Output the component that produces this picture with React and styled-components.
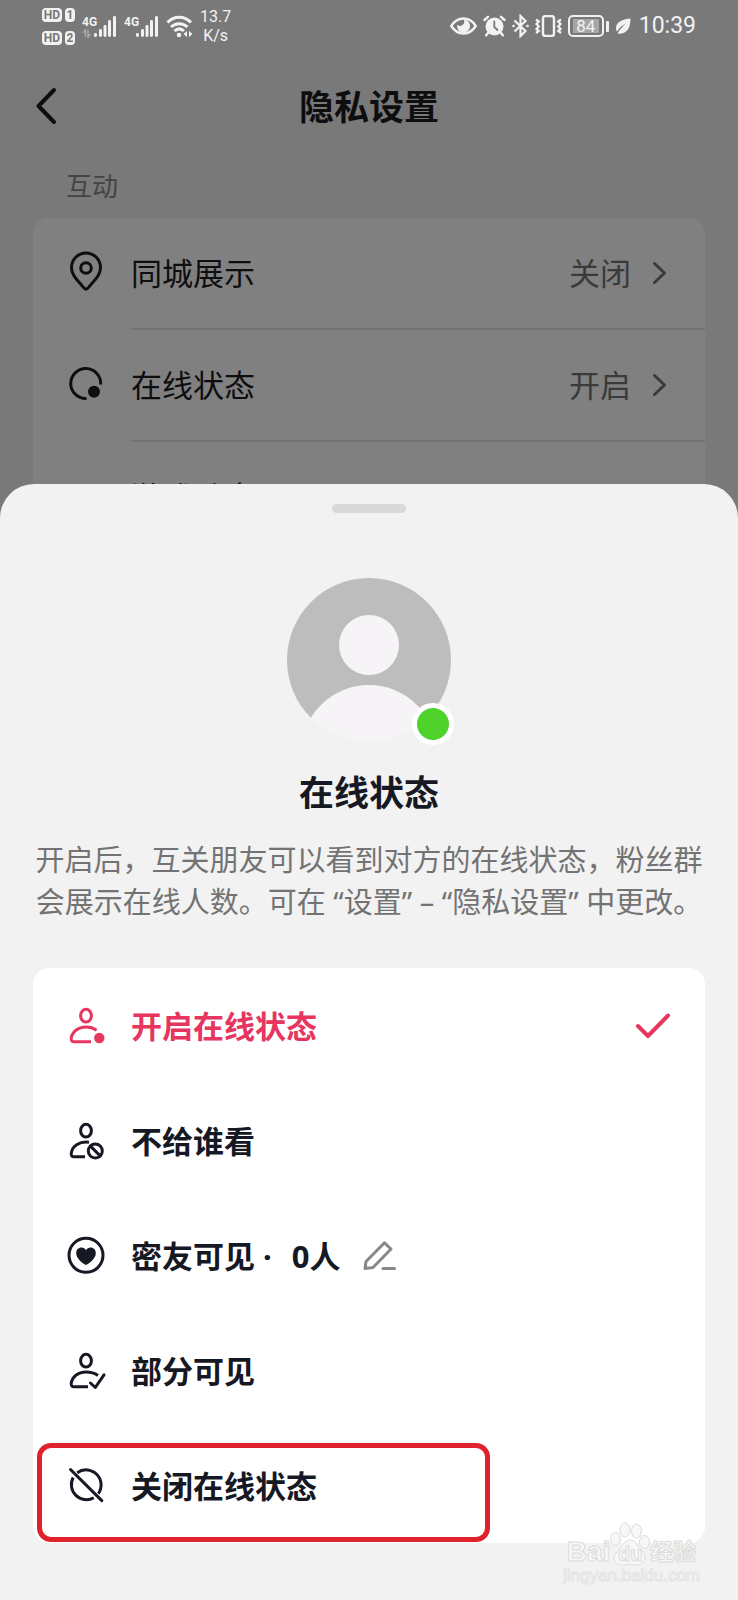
import { useState } from 'react';
import styled, { createGlobalStyle } from 'styled-components';

const GlobalStyle = createGlobalStyle`
    * {
        box-sizing: border-box;
    }

    body {
        margin: 0;
        background: #797979;
        font-family: 'Noto Sans', 'Noto Sans CJK SC', sans-serif;
    }

    button {
        border: 0;
        padding: 0;
        background: none;
        color: inherit;
        font: inherit;
        cursor: pointer;
    }
`;

const Screen = styled.div`
    position: relative;
    display: flex;
    flex-direction: column;
    min-height: 100vh;
    overflow: hidden;
`;

const StatusBar = styled.div`
    display: flex;
    align-items: center;
    justify-content: space-between;
    height: 52px;
    padding: 0 42px;
    color: #f2f2f2;
    font-family: Roboto, sans-serif;
`;

const StatusGroup = styled.div`
    display: flex;
    align-items: center;
    gap: ${(props) => props.$gap}px;
`;

const Sims = styled.div`
    display: grid;
    grid-template-columns: 20px 10px;
    gap: 9px 3px;
`;

const SimBadge = styled.span`
    border-radius: 4px;
    background: #f2f2f2;
    color: #797979;
    font-size: 12px;
    font-weight: 700;
    line-height: 14px;
    text-align: center;
`;

const Speed = styled.div`
    font-size: 16px;
    line-height: 19px;
    text-align: center;
`;

const Battery = styled.div`
    display: flex;
    align-items: center;
    gap: 2px;

    &::after {
        content: '';
        width: 3px;
        height: 11px;
        border-radius: 1px;
        background: #f2f2f2;
    }
`;

const BatteryLevel = styled.span`
    width: 36px;
    border: 2px solid #f2f2f2;
    border-radius: 5px;
    background: linear-gradient(#a6a6a6, #a6a6a6) center / 26px 14px no-repeat;
    font-size: 17px;
    line-height: 18px;
    text-align: center;
`;

const Clock = styled.time`
    margin-left: 2px;
    font-size: 23px;
    line-height: 28px;
`;

const Header = styled.header`
    display: grid;
    grid-template-columns: 40px 1fr 40px;
    align-items: center;
    height: 110px;
    padding: 0 28px;
    color: #0e0e10;
`;

const BackButton = styled.button`
    justify-self: start;
    padding-left: 8px;
    line-height: 0;
`;

const Title = styled.h1`
    margin: 0;
    font-size: 35px;
    font-weight: 700;
    line-height: 48px;
    text-align: center;
`;

const SectionLabel = styled.h2`
    margin: 0;
    padding: 0 66px;
    color: #444;
    font-size: 26px;
    font-weight: 400;
    line-height: 48px;
`;

const SettingList = styled.div`
    margin: 8px 33px 0;
    border-radius: 16px;
    background: #808080;
`;

const SettingRow = styled.button`
    display: flex;
    align-items: center;
    gap: 25px;
    width: 100%;
    height: 112px;
    padding-left: 33px;
    color: #0e0e10;
    font-size: 31px;
    line-height: 44px;
    text-align: left;
`;

const SettingBody = styled.span`
    display: flex;
    flex: 1;
    align-items: center;
    height: 112px;
    padding-right: 38px;
    border-bottom: 2px solid #737373;
`;

const SettingValue = styled.span`
    margin: 0 21px 0 auto;
    color: #3a3a3a;
`;

const Icon = styled.svg`
    flex: none;
    overflow: visible;
    fill: none;
    stroke: currentColor;
    stroke-width: 3;
    stroke-linecap: round;
    stroke-linejoin: round;
`;

const Sheet = styled.section`
    position: relative;
    flex: 1;
    display: flex;
    flex-direction: column;
    align-items: center;
    margin-top: -70px;
    padding: 20px 33px 57px;
    border-radius: 34px 34px 0 0;
    background: #f2f2f2;
    color: #161823;
`;

const Handle = styled.div`
    width: 74px;
    height: 9px;
    border-radius: 5px;
    background: #d9d9d9;
`;

const Avatar = styled.div`
    position: relative;
    margin-top: 65px;
    line-height: 0;
`;

const OnlineDot = styled.span`
    position: absolute;
    right: -3px;
    bottom: -3px;
    width: 42px;
    height: 42px;
    border: 5px solid #fff;
    border-radius: 50%;
    background: #4fd22b;
`;

const SheetTitle = styled(Title).attrs({ as: 'h2' })`
    margin-top: 27px;
`;

const Description = styled.p`
    margin: 22px -20px 0;
    color: #737373;
    font-size: 29px;
    line-height: 42px;
    text-align: center;
`;

const OptionList = styled.div`
    width: 100%;
    margin-top: 45px;
    border-radius: 16px;
    background: #fff;
`;

const OptionRow = styled.div`
    position: relative;
    display: flex;
    align-items: center;
    height: 115px;
    padding: 0 35px 0 33px;
    color: ${(props) => (props.$active ? '#e6365f' : '#161823')};
`;

const OptionLabel = styled.label`
    display: flex;
    flex: ${(props) => (props.$fill ? 1 : 'none')};
    align-items: center;
    gap: 25px;
    font-size: 31px;
    font-weight: 700;
    line-height: 44px;
    cursor: pointer;

    input {
        position: absolute;
        opacity: 0;
    }
`;

const Count = styled.span`
    margin-left: 20px;
`;

const EditButton = styled.button`
    margin-left: 22px;
    color: #888;
    line-height: 0;
`;

const Highlight = styled.div`
    position: absolute;
    inset: 15px auto 1px 4px;
    width: 68%;
    max-width: 453px;
    border: 5px solid #e0222c;
    border-radius: 14px;
    pointer-events: none;
`;

const Watermark = styled.div`
    position: absolute;
    right: 38px;
    bottom: 14px;
    display: flex;
    flex-direction: column;
    align-items: center;
    color: #f7f7f7;
    font-family: 'Liberation Sans', 'Noto Sans CJK SC', sans-serif;
    -webkit-text-stroke: 1px #dcdcdc;
    pointer-events: none;
`;

const WatermarkBrand = styled.div`
    display: flex;
    align-items: flex-end;
    font-size: 28px;
    font-weight: 700;
    line-height: 28px;
`;

const WatermarkPaw = styled.span`
    display: grid;
    justify-items: center;
    align-items: end;

    > * {
        grid-area: 1 / 1;
    }

    span {
        font-size: 20px;
        line-height: 24px;
    }
`;

const WatermarkName = styled.span`
    font-size: 23px;
`;

const WatermarkSite = styled.div`
    font-size: 17px;
    line-height: 20px;
    -webkit-text-stroke: 1px #e4e4e4;
`;

const PERSON_HEAD = <ellipse cx="20" cy="9.7" rx="5.4" ry="6.4" />;

const ICONS = {
    pin: (
        <>
            <path d="M20 35.3 C18.8 35.3 18 34.2 16.6 32.4 C11.5 26.2 5.5 21.5 5.5 13.5 A14.5 14.5 0 0 1 34.5 13.5 C34.5 21.5 28.5 26.2 23.4 32.4 C22 34.2 21.2 35.3 20 35.3 Z" />
            <circle cx="20" cy="14" r="5.3" />
        </>
    ),
    online: (
        <>
            <path d="M34.7 18.5 A15 15 0 1 0 20.5 32.5" strokeLinecap="butt" />
            <circle cx="28" cy="25.7" r="6" fill="currentColor" stroke="none" />
        </>
    ),
    game: (
        <>
            <rect x="4" y="11" width="32" height="21" rx="10" />
            <path d="M10 21.5 H18 M14 17.5 V25.5 M27 21.5 H28" />
        </>
    ),
    personDot: (
        <>
            {PERSON_HEAD}
            <path d="M30.6 24.2 C27.5 22 24 21 20 21 C12 21 6 25.8 5.2 32.5 C5 34.8 6 35.7 8 35.7 H25" strokeLinecap="butt" />
            <circle cx="33.3" cy="32" r="5.2" fill="currentColor" stroke="none" />
        </>
    ),
    personBlock: (
        <>
            {PERSON_HEAD}
            <path d="M23 21.2 C13 20 6 25.5 5.2 32.5 C5 34.8 6 35.7 8 35.7 H19" strokeLinecap="butt" />
            <circle cx="29.3" cy="30" r="7" />
            <path d="M24.4 25.1 L34.2 34.9" />
        </>
    ),
    heart: (
        <>
            <circle cx="20" cy="19.3" r="17" />
            <path
                d="M20 29 C16.5 27.2 10.2 22.4 10.2 17.2 C10.2 13.8 12.5 11.6 15.3 11.6 C17.4 11.6 19 12.6 20 14.2 C21 12.6 22.6 11.6 24.7 11.6 C27.5 11.6 29.8 13.8 29.8 17.2 C29.8 22.4 23.5 27.2 20 29 Z"
                fill="currentColor"
                stroke="none"
            />
        </>
    ),
    personCheck: (
        <>
            {PERSON_HEAD}
            <path d="M32 24.4 C28.5 22 25 21 20 21 C12 21 6 25.8 5.2 32.5 C5 34.8 6 35.7 8 35.7 H22" strokeLinecap="butt" />
            <path d="M24.5 32 L29.3 36.5 L38 23.8" />
        </>
    ),
    off: (
        <>
            <path d="M7.2 11.5 A15 15 0 0 0 27.8 31.7" strokeLinecap="butt" />
            <path d="M11.2 6.8 A15 15 0 0 1 32.3 27.6" strokeLinecap="butt" />
            <path d="M4.5 3.5 L35.8 34.6" />
        </>
    ),
};

const settings = [
    { icon: 'pin', label: '同城展示', value: '关闭' },
    { icon: 'online', label: '在线状态', value: '开启' },
    { icon: 'game', label: '游戏动态', value: '' },
];

const options = [
    { id: 'open', icon: 'personDot', label: '开启在线状态' },
    { id: 'hide', icon: 'personBlock', label: '不给谁看' },
    { id: 'close-friends', icon: 'heart', label: '密友可见 ·', count: '0人', editable: true },
    { id: 'partial', icon: 'personCheck', label: '部分可见' },
    { id: 'off', icon: 'off', label: '关闭在线状态', highlighted: true },
];

function Signal({ data }) {
    return (
        <svg width="35" height="24" viewBox="0 0 35 24" fill="#f2f2f2">
            <text x="0" y="12" fontSize="12" fontWeight="700">
                4G
            </text>
            {data && (
                <path d="M3.5 23 V16 L1 19 M6 16 V23 L8.5 20" fill="none" stroke="#a8a8a8" strokeWidth="1.6" />
            )}
            <rect x="12" y="19" width="3" height="4" rx="1.4" />
            <rect x="17" y="15" width="3" height="8" rx="1.4" />
            <rect x="21.5" y="11" width="3" height="12" rx="1.4" />
            <rect x="26" y="6" width="3" height="17" rx="1.4" />
            <rect x="31" y="2" width="3" height="21" rx="1.4" />
        </svg>
    );
}

function Wifi() {
    return (
        <svg width="27" height="24" viewBox="0 0 27 24" fill="none" stroke="#f2f2f2" strokeWidth="3">
            <path d="M1.5 8.5 C8 1.5 18.5 1.5 25 8.5" />
            <path d="M5 13 C9.5 8.5 17 8.5 21.5 13" />
            <path d="M8.5 17 C11.5 14.3 15 14.3 18 17" />
            <circle cx="13" cy="21" r="2.3" fill="#f2f2f2" stroke="none" />
            <path d="M21 17 V23 L17.5 20 Z M23 17 V23 L26.5 20 Z" fill="#f2f2f2" stroke="none" />
        </svg>
    );
}

function StatusIcons() {
    return (
        <>
            <svg width="27" height="18" viewBox="0 0 27 18" fill="none" stroke="#f2f2f2" strokeWidth="2.4">
                <path d="M1.3 9 C7.5 -1 19.5 -1 25.7 9 C19.5 19 7.5 19 1.3 9 Z" />
                <path d="M13.5 2.5 A6.5 6.5 0 1 1 7.2 7.5 A3.3 3.3 0 0 0 12.5 7.8 A3.5 3.5 0 0 0 13.5 2.5 Z" fill="#f2f2f2" stroke="none" />
            </svg>
            <svg width="23" height="22" viewBox="0 0 23 22" fill="none" stroke="#f2f2f2" strokeWidth="2.4" strokeLinecap="round">
                <circle cx="11.5" cy="11.5" r="9" fill="#f2f2f2" stroke="none" />
                <path d="M1.5 5 L5 1.8 M21.5 5 L18 1.8 M5 18 L3.2 20.3 M18 18 L19.8 20.3" />
                <path d="M11.3 6.5 V12 L14.5 15" stroke="#797979" strokeWidth="1.8" />
            </svg>
            <svg width="17" height="24" viewBox="0 0 17 24" fill="none" stroke="#f2f2f2" strokeWidth="2.2">
                <path d="M2.5 6.5 L13.5 17 L8.5 22 V2 L13.5 7 L2.5 17.5" />
                <circle cx="1.5" cy="12" r="1.3" fill="#f2f2f2" stroke="none" />
                <circle cx="15.5" cy="12" r="1.3" fill="#f2f2f2" stroke="none" />
            </svg>
            <svg width="27" height="22" viewBox="0 0 27 22" fill="none" stroke="#f2f2f2" strokeWidth="2.2">
                <rect x="8" y="1" width="11" height="20" rx="2.5" strokeWidth="2.4" />
                <path d="M1 4.5 L3.8 6.5 L1.5 9 L3.8 11.5 L1.5 14 L3.8 16 L1 18" />
                <path d="M26 4.5 L23.2 6.5 L25.5 9 L23.2 11.5 L25.5 14 L23.2 16 L26 18" />
            </svg>
        </>
    );
}

function Leaf() {
    return (
        <svg width="16" height="16" viewBox="0 0 16 16" fill="#f2f2f2">
            <path d="M15.5 0.5 C8 1 1 4 1 10 C1 11.5 1.4 12.5 2 13.4 C4.5 9.5 7.5 7.2 11 5.5 C7.5 8.5 4.5 11.5 2.5 15.5 C10.5 16.5 15.5 12 15.5 0.5 Z" />
        </svg>
    );
}

function Setting({ icon, label, value }) {
    return (
        <SettingRow type="button">
            <Icon width="40" height="40" viewBox="0 0 40 40">
                {ICONS[icon]}
            </Icon>
            <SettingBody>
                {label}
                <SettingValue>{value}</SettingValue>
                <Icon width="15" height="24" viewBox="0 0 15 24" color="#3a3a3a">
                    <path d="M2.5 2.5 L12.5 12 L2.5 21.5" />
                </Icon>
            </SettingBody>
        </SettingRow>
    );
}

function Option({ option, active, onSelect }) {
    return (
        <OptionRow $active={active}>
            <OptionLabel htmlFor={option.id} $fill={!option.editable}>
                <input type="radio" id={option.id} name="status" checked={active} onChange={() => onSelect(option.id)} />
                <Icon width="40" height="40" viewBox="0 0 40 40">
                    {ICONS[option.icon]}
                </Icon>
                <span>
                    {option.label}
                    {option.count && <Count>{option.count}</Count>}
                </span>
            </OptionLabel>
            {option.editable && (
                <EditButton type="button" aria-label="编辑">
                    <Icon width="33" height="30" viewBox="0 0 33 30">
                        <path d="M2 27.5 L3 20.5 L21.5 1.8 L28 8 L10 26.5 Z M20 27.5 H31.5" />
                    </Icon>
                </EditButton>
            )}
            {active && (
                <Icon width="34" height="26" viewBox="0 0 34 26">
                    <path d="M2 13 L12 23 L32 2.5" strokeWidth="4" />
                </Icon>
            )}
            {option.highlighted && <Highlight />}
        </OptionRow>
    );
}

export default function App() {
    const [selected, setSelected] = useState('open');

    return (
        <Screen>
            <GlobalStyle />
            <StatusBar>
                <StatusGroup $gap={7}>
                    <Sims>
                        <SimBadge>HD</SimBadge>
                        <SimBadge>1</SimBadge>
                        <SimBadge>HD</SimBadge>
                        <SimBadge>2</SimBadge>
                    </Sims>
                    <Signal data />
                    <Signal />
                    <Wifi />
                    <Speed>
                        13.7
                        <br />
                        K/s
                    </Speed>
                </StatusGroup>
                <StatusGroup $gap={6}>
                    <StatusIcons />
                    <Battery>
                        <BatteryLevel>84</BatteryLevel>
                    </Battery>
                    <Leaf />
                    <Clock>10:39</Clock>
                </StatusGroup>
            </StatusBar>

            <Header>
                <BackButton type="button" aria-label="返回">
                    <Icon width="20" height="36" viewBox="0 0 20 36">
                        <path d="M18 1 L2.5 17 L18 33" strokeWidth="4" />
                    </Icon>
                </BackButton>
                <Title>隐私设置</Title>
            </Header>

            <SectionLabel>互动</SectionLabel>
            <SettingList>
                {settings.map((item) => (
                    <Setting key={item.label} {...item} />
                ))}
            </SettingList>

            <Sheet>
                <Handle />
                <Avatar>
                    <svg width="164" height="164" viewBox="0 0 164 164">
                        <clipPath id="avatar-clip">
                            <circle cx="82" cy="82" r="82" />
                        </clipPath>
                        <g clipPath="url(#avatar-clip)">
                            <path d="M0 0 H164 V140 H0 Z" fill="#bdbdbd" />
                            <circle cx="82" cy="67" r="30" fill="#f7f4f7" />
                            <circle cx="82" cy="175" r="68" fill="#f7f4f7" />
                        </g>
                    </svg>
                    <OnlineDot />
                </Avatar>
                <SheetTitle>在线状态</SheetTitle>
                <Description>
                    开启后，互关朋友可以看到对方的在线状态，粉丝群
                    <br />
                    会展示在线人数。可在 “设置” – “隐私设置” 中更改。
                </Description>
                <OptionList>
                    {options.map((option) => (
                        <Option
                            key={option.id}
                            option={option}
                            active={selected === option.id}
                            onSelect={setSelected}
                        />
                    ))}
                </OptionList>
            </Sheet>

            <Watermark>
                <WatermarkBrand>
                    Bai
                    <WatermarkPaw>
                        <svg width="40" height="44" viewBox="0 0 40 44" fill="#f7f7f7" stroke="#dcdcdc">
                            <ellipse cx="5.5" cy="17" rx="5" ry="6.5" />
                            <ellipse cx="15" cy="8" rx="5" ry="7" />
                            <ellipse cx="26.5" cy="9" rx="5" ry="7" />
                            <ellipse cx="34.5" cy="20" rx="5" ry="6.5" />
                            <path d="M20 18 C26 18 27 25 32 29 C38 35 35 43 27 43 C22 43 18 42 13 43 C4 44 1 35 7 30 C12 26 14 18 20 18 Z" />
                        </svg>
                        <span>du</span>
                    </WatermarkPaw>
                    <WatermarkName>经验</WatermarkName>
                </WatermarkBrand>
                <WatermarkSite>jingyan.baidu.com</WatermarkSite>
            </Watermark>
        </Screen>
    );
}
